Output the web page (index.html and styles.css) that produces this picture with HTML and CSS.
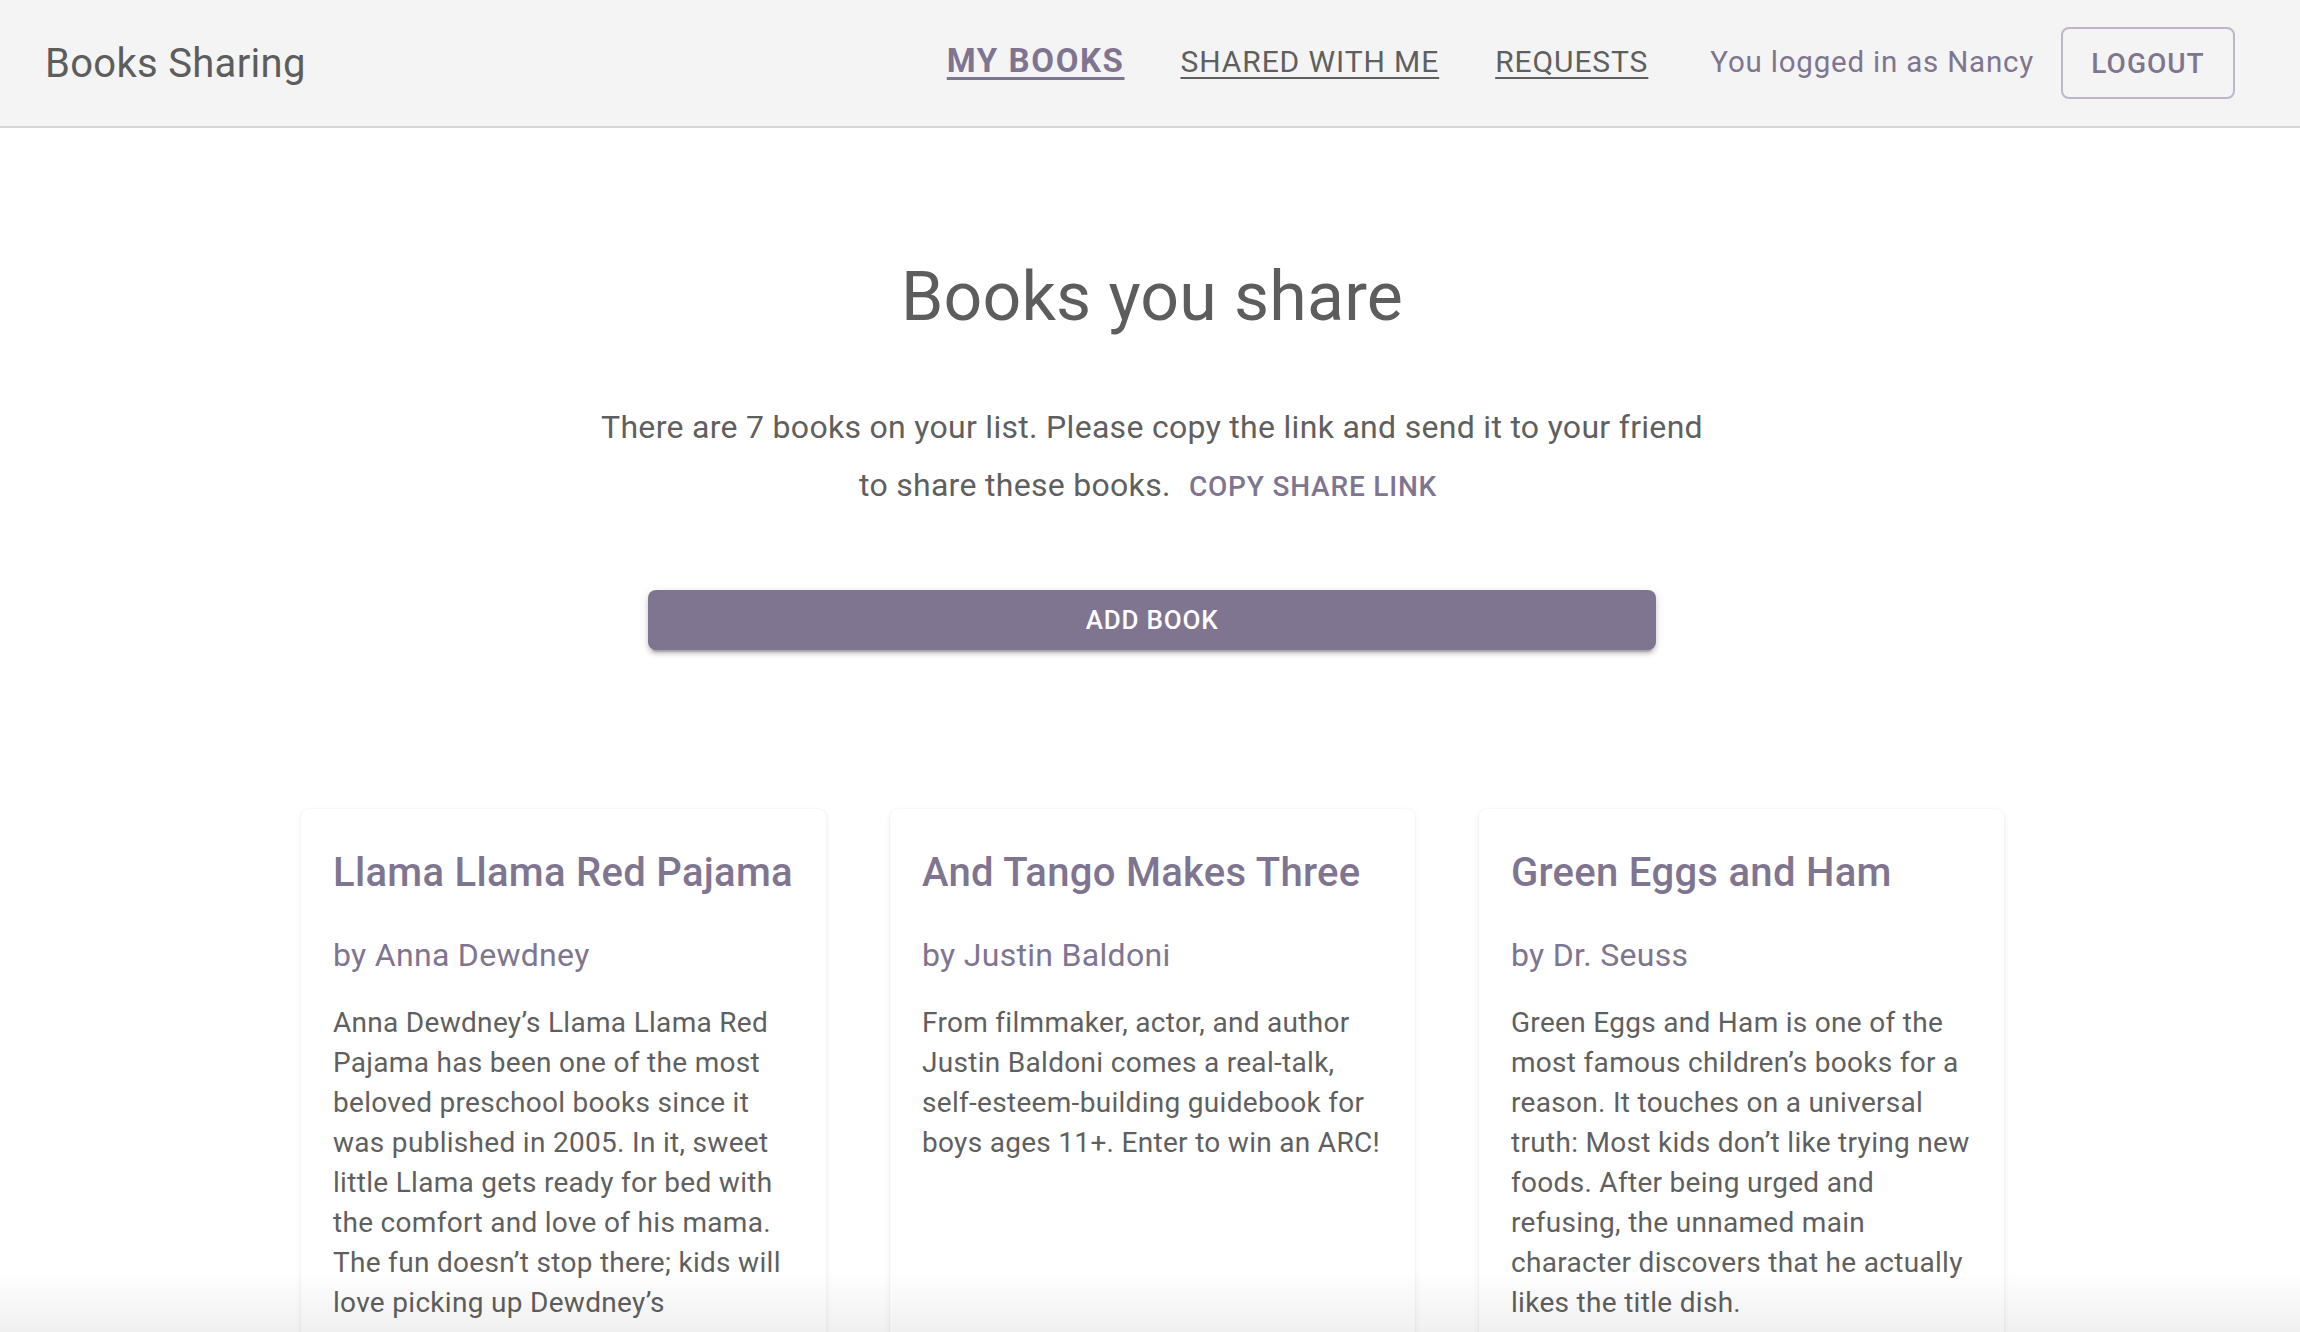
FILE: index.html
```html
<!DOCTYPE html>
<html lang="en">
<head>
<meta charset="utf-8">
<title>Books Sharing</title>
<link rel="stylesheet" href="styles.css">
</head>
<body>
<header class="appbar">
  <div class="logo">Books Sharing</div>
  <nav class="nav">
    <a class="nav-link active" href="#">MY BOOKS</a>
    <a class="nav-link" href="#">SHARED WITH ME</a>
    <a class="nav-link" href="#">REQUESTS</a>
  </nav>
  <div class="user">
    <span class="user-name">You logged in as Nancy</span>
    <button class="btn-outline">LOGOUT</button>
  </div>
</header>

<main class="main">
  <h1 class="title">Books you share</h1>
  <p class="intro">There are 7 books on your list. Please copy the link and send it to your friend to share these books. <button class="btn-text">COPY SHARE LINK</button></p>
  <button class="btn-primary">ADD BOOK</button>

  <section class="cards">
    <article class="card">
      <h2 class="card-title">Llama Llama Red Pajama</h2>
      <div class="card-author">by Anna Dewdney</div>
      <p class="card-desc">Anna Dewdney’s Llama Llama Red Pajama has been one of the most beloved preschool books since it was published in 2005. In it, sweet little Llama gets ready for bed with the comfort and love of his mama. The fun doesn’t stop there; kids will love picking up Dewdney’s companion books, too.</p>
    </article>
    <article class="card">
      <h2 class="card-title">And Tango Makes Three</h2>
      <div class="card-author">by Justin Baldoni</div>
      <p class="card-desc">From filmmaker, actor, and author Justin Baldoni comes a real-talk, self-esteem-building guidebook for boys ages 11+. Enter to win an ARC!</p>
    </article>
    <article class="card">
      <h2 class="card-title">Green Eggs and Ham</h2>
      <div class="card-author">by Dr. Seuss</div>
      <p class="card-desc">Green Eggs and Ham is one of the most famous children’s books for a reason. It touches on a universal truth: Most kids don’t like trying new foods. After being urged and refusing, the unnamed main character discovers that he actually likes the title dish.</p>
    </article>
  </section>
</main>
<div class="bottom-fade"></div>
</body>
</html>
```

FILE: styles.css
```css
html, body {
  margin: 0;
  padding: 0;
  overflow: hidden;
  background: #ffffff;
  font-family: Roboto, "Liberation Sans", Arial, sans-serif;
  color: #5f5f5f;
}

.appbar {
  height: 126px;
  background: #f4f4f4;
  border-bottom: 2px solid #d6d6d6;
  display: flex;
  align-items: center;
  padding: 0 65px 0 45px;
}

.logo {
  font-size: 40px;
  font-weight: 400;
  color: #5d5d5d;
  letter-spacing: 0.3px;
  flex: 1;
}

.nav {
  display: flex;
  align-items: baseline;
  gap: 56px;
  margin-right: 62px;
  margin-bottom: 6px;
}

.nav-link {
  font-size: 30px;
  letter-spacing: 0.9px;
  color: #5f5f5f;
  text-decoration: underline;
  text-decoration-thickness: 2px;
  text-underline-offset: 5px;
}

.nav-link.active {
  font-size: 33px;
  color: #7f7591;
  font-weight: 700;
  letter-spacing: 1.6px;
  text-decoration-thickness: 3px;
}

.user {
  display: flex;
  align-items: center;
  gap: 27px;
}

.user-name {
  font-size: 29.5px;
  color: #7f7591;
  letter-spacing: 0.8px;
  margin-bottom: 2px;
}

.btn-outline {
  width: 174px;
  height: 72px;
  border: 2px solid #bdb6c9;
  border-radius: 8px;
  background: transparent;
  font-family: inherit;
  font-size: 28px;
  font-weight: 500;
  letter-spacing: 1px;
  color: #7f7591;
  display: inline-flex;
  align-items: center;
  justify-content: center;
  padding: 0;
}

.main {
  display: flex;
  flex-direction: column;
  align-items: center;
  padding-left: 4px;
}

.title {
  margin: 127px 0 0;
  font-size: 68px;
  line-height: 84px;
  font-weight: 400;
  color: #5d5d5d;
  letter-spacing: 0.2px;
}

.intro {
  margin: 59px 0 0;
  max-width: 1118px;
  text-align: center;
  font-size: 32px;
  line-height: 58px;
  letter-spacing: 0.3px;
  color: #5f5f5f;
}

.btn-text {
  border: none;
  background: transparent;
  font-family: inherit;
  font-size: 28px;
  line-height: 40px;
  font-weight: 500;
  letter-spacing: 0.8px;
  color: #7f7591;
  padding: 0 8px 0 10px;
  margin-left: 0;
  vertical-align: baseline;
}

.btn-primary {
  margin-top: 76px;
  width: 1008px;
  height: 60px;
  border: none;
  border-radius: 8px;
  background: #7f7591;
  color: #ffffff;
  font-family: inherit;
  font-size: 26px;
  font-weight: 500;
  letter-spacing: 0.8px;
  box-shadow: 0 6px 2px -4px rgba(0,0,0,0.2), 0 4px 4px 0 rgba(0,0,0,0.14), 0 2px 10px 0 rgba(0,0,0,0.12);
}

.cards {
  margin-top: 159px;
  display: flex;
  justify-content: center;
  align-items: stretch;
  gap: 64px;
  padding-left: 1px;
}

.card {
  width: 525px;
  box-sizing: border-box;
  padding: 32px 32px 40px;
  background: #ffffff;
  border-radius: 8px;
  box-shadow: 0 2px 6px rgba(0,0,0,0.07), 0 0 2px rgba(0,0,0,0.07);
}

.card-title {
  margin: 0;
  font-size: 40px;
  line-height: 64px;
  font-weight: 500;
  color: #7f7591;
  letter-spacing: 0.3px;
}

.card-author {
  margin-top: 26px;
  font-size: 32px;
  line-height: 48px;
  color: #7f7591;
  letter-spacing: 0.3px;
}

.card-desc {
  margin: 24px 0 0;
  font-size: 28px;
  line-height: 40px;
  max-height: 320px;
  overflow: hidden;
  letter-spacing: 0.3px;
  color: #5f5f5f;
}

.bottom-fade {
  position: fixed;
  left: 0;
  right: 0;
  bottom: 0;
  height: 62px;
  pointer-events: none;
  background: linear-gradient(to bottom, rgba(0,0,0,0), rgba(0,0,0,0.06));
}
```
